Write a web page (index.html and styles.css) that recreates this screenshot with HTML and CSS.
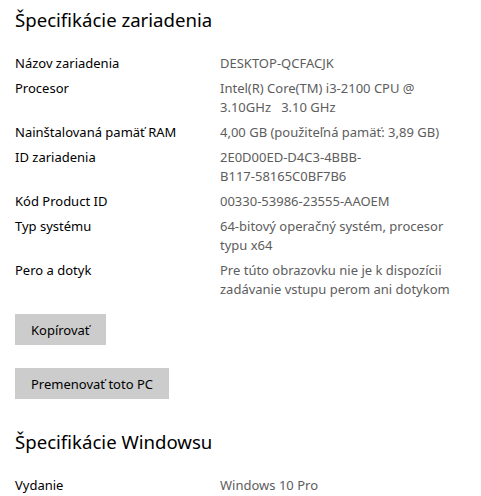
FILE: index.html
```html
<!DOCTYPE html>
<html lang="sk">
<head>
<meta charset="utf-8">
<title>Špecifikácie zariadenia</title>
<link rel="stylesheet" href="styles.css">
</head>
<body>
<main class="page">
  <h2 class="section-title">Špecifikácie zariadenia</h2>
  <dl class="specs">
    <dt>Názov zariadenia</dt><dd>DESKTOP-QCFACJK</dd>
    <dt>Procesor</dt><dd>Intel(R) Core(TM) i3-2100 CPU @<br>3.10GHz&nbsp;&nbsp; 3.10 GHz</dd>
    <dt>Nainštalovaná pamäť RAM</dt><dd>4,00 GB (použiteľná pamäť: 3,89 GB)</dd>
    <dt>ID zariadenia</dt><dd>2E0D00ED-D4C3-4BBB-<br>B117-58165C0BF7B6</dd>
    <dt>Kód Product ID</dt><dd>00330-53986-23555-AAOEM</dd>
    <dt>Typ systému</dt><dd>64-bitový operačný systém, procesor<br>typu x64</dd>
    <dt>Pero a dotyk</dt><dd>Pre túto obrazovku nie je k dispozícii<br>zadávanie vstupu perom ani dotykom</dd>
  </dl>
  <div class="actions">
    <button class="btn" type="button">Kopírovať</button>
    <button class="btn" type="button">Premenovať toto PC</button>
  </div>
  <h2 class="section-title second">Špecifikácie Windowsu</h2>
  <dl class="specs">
    <dt>Vydanie</dt><dd>Windows 10 Pro</dd>
  </dl>
</main>
</body>
</html>
```

FILE: styles.css
```css
html, body {
  margin: 0;
  padding: 0;
  background: #ffffff;
}

body {
  font-family: "Noto Sans", "Open Sans", "Liberation Sans", sans-serif;
  font-size: 13px;
  color: #000000;
}

.page {
  padding: 6px 15px 0 15px;
}

.section-title {
  margin: 0;
  font-size: 18.6px;
  font-weight: 400;
  line-height: 28px;
  color: #000000;
}

.specs {
  display: grid;
  grid-template-columns: 205px 1fr;
  row-gap: 6px;
  margin: 19.5px 0 0 0;
  line-height: 19px;
}

.specs dt {
  margin: 0;
  color: #000000;
}

.specs dd {
  margin: 0;
  color: #5d5d5d;
  white-space: nowrap;
}

.actions {
  display: flex;
  flex-direction: column;
  align-items: flex-start;
  gap: 23px;
  margin-top: 15.5px;
}

.btn {
  height: 31px;
  padding: 0 16px;
  border: 0;
  border-radius: 0;
  background: #cccccc;
  color: #000000;
  font-family: inherit;
  font-size: 13px;
}

.section-title.second {
  margin-top: 29px;
}
```
